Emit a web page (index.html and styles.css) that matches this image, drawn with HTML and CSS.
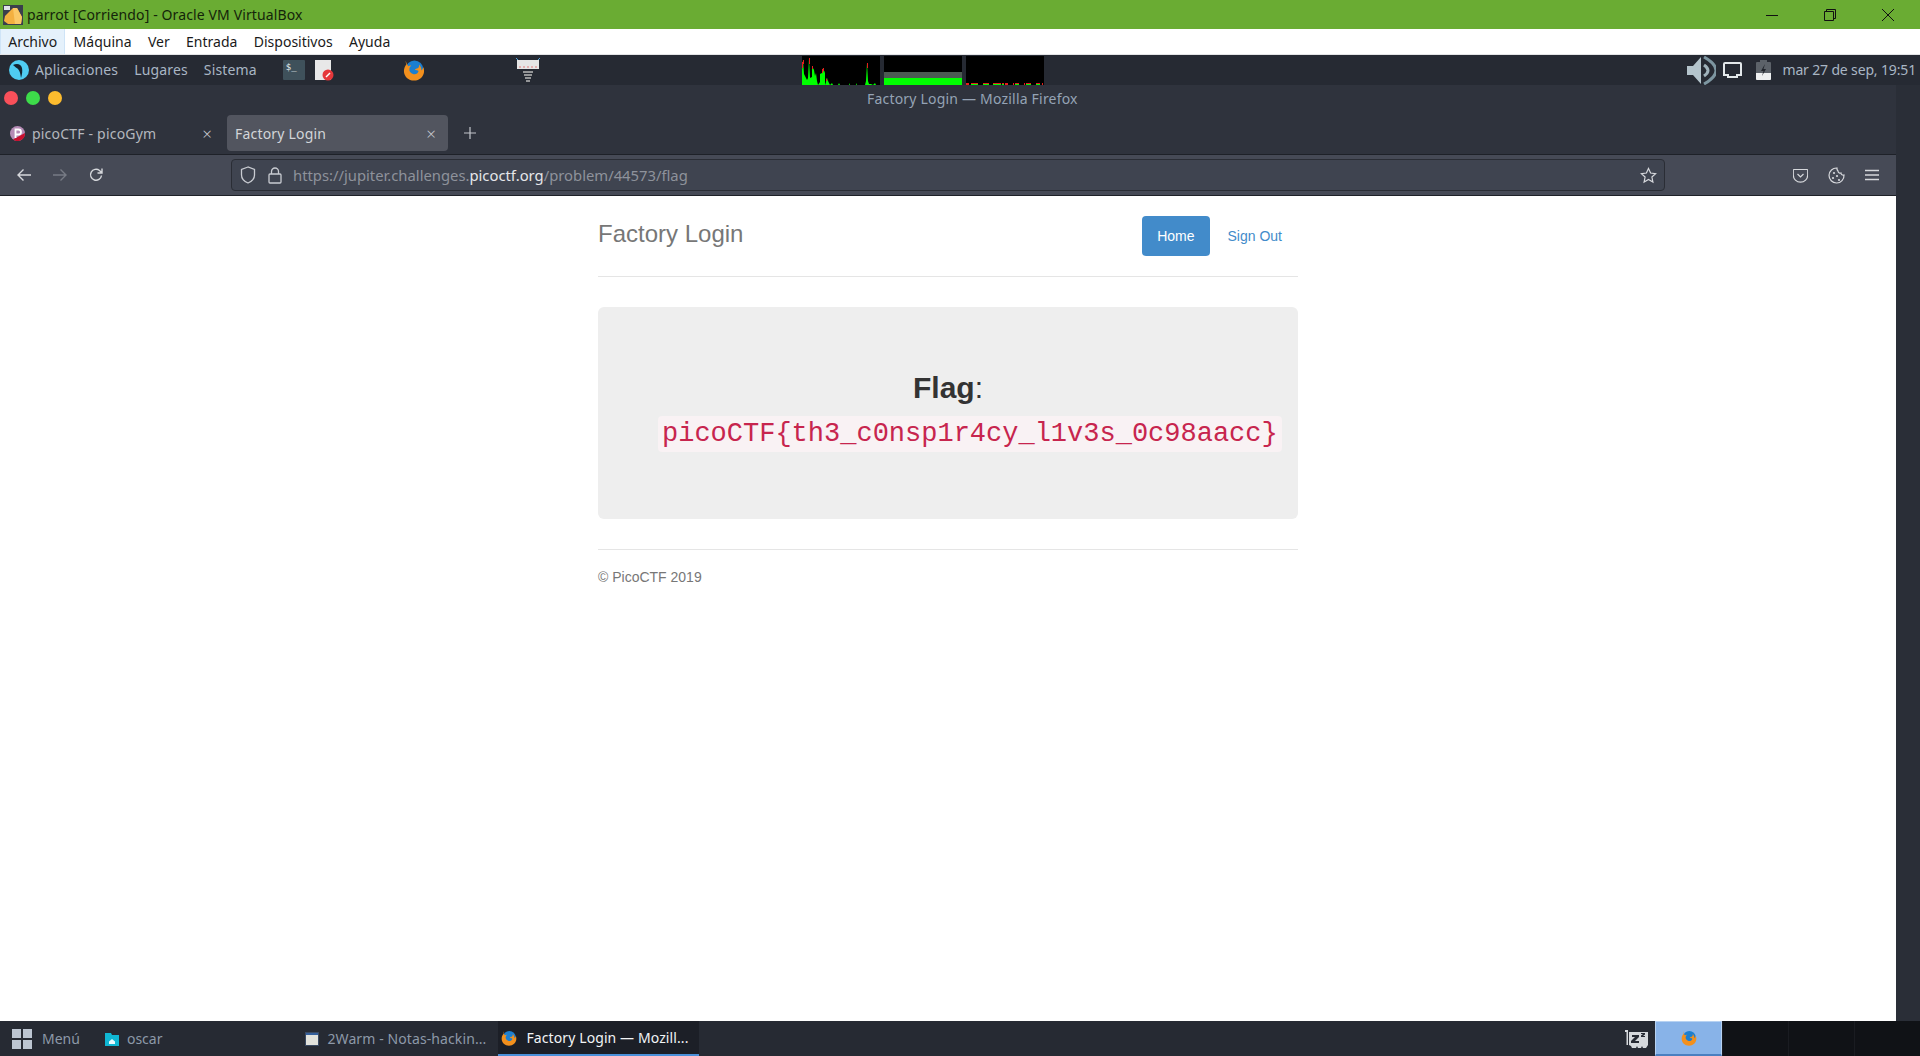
FILE: index.html
```html
<!DOCTYPE html>
<html lang="es">
<head>
  <meta charset="UTF-8">
  <title>parrot [Corriendo] - Oracle VM VirtualBox</title>
  <link rel="stylesheet" href="styles.css">
</head>
<body>

  <svg class="defs" width="0" height="0">
    <symbol id="firefox" viewBox="0 0 24 24">
      <circle cx="12.5" cy="11" r="9.5" fill="#1c7fd0"/>
      <path d="M3 2c0 2 .2 3 .8 3.8C2.5 7.5 1 10 1 13c0 6 5 10.5 11 10.5S23 19 23 13c0-1.5-.3-3-.9-4.2-.3 2-1.100 3-2.100 3.700.2-2.500-.8-5-2.500-6.500.4 2-.3 3.500-1.500 4-1.500.3-3 1-3 1.800 1 .7 3 .5 4 1.200-.5 2.500-3 4-5.500 3.500C8 15.500 6.500 13 7 10.500c.2-1.500 1-2.500 2-3.500-1.500 0-2.500.3-3.500 1-.3-1.500-1-2-1.300-2.500C3.800 4.500 3.300 3.500 3 2z" fill="#f3901d"/>
    </symbol>
  </svg>

  <div class="vbox-title">
    <svg class="vbox-icon" width="20" height="20" viewBox="0 0 20 20">
      <rect width="20" height="20" fill="#3a3f4c"/>
      <path d="M2 11 10 3h4l5 9-1 7H5l-4-3z" fill="#f4b040"/>
      <path d="M10 3h4l5 9-1 7h-6l-1-8z" fill="#fbc866"/>
      <rect x="1" y="1" width="6" height="4" fill="#dfe3e8"/>
    </svg>
    <span class="vbox-name">parrot [Corriendo] - Oracle VM VirtualBox</span>
    <div class="win-buttons">
      <svg width="14" height="14" viewBox="0 0 14 14"><path d="M1 7.5h12" stroke="#111" fill="none"/></svg>
      <svg width="14" height="14" viewBox="0 0 14 14"><path d="M3.5 3.500V1.500h9v9h-2M1.500 3.500h9v9h-9z" stroke="#111" fill="none"/></svg>
      <svg width="14" height="14" viewBox="0 0 14 14"><path d="M1 1l12 12M13 1 1 13" stroke="#111" fill="none"/></svg>
    </div>
  </div>

  <div class="vbox-menu">
    <span class="menu-item active">Archivo</span>
    <span class="menu-item">Máquina</span>
    <span class="menu-item">Ver</span>
    <span class="menu-item">Entrada</span>
    <span class="menu-item">Dispositivos</span>
    <span class="menu-item">Ayuda</span>
  </div>

  <div class="top-panel">
    <svg class="parrot-logo" width="20" height="20" viewBox="0 0 20 20">
      <circle cx="10" cy="10" r="10" fill="#4fcdf2"/>
      <path d="M4 5c4-2 8-1 9 3 .6 3 .2 6-1 10-.6-4-1-7-3-9-1-1-3-2-5-4z" fill="#14232f"/>
    </svg>
    <span class="panel-link first">Aplicaciones</span>
    <span class="panel-link">Lugares</span>
    <span class="panel-link">Sistema</span>

    <div class="term-icon">$_</div>
    <svg class="doc-icon" width="19" height="21" viewBox="0 0 19 21">
      <rect width="16" height="20" fill="#e8e8e8"/>
      <circle cx="13" cy="15" r="5.5" fill="#e5383b"/>
      <path d="M11 17l4-4" stroke="#fff" stroke-width="1.5"/>
    </svg>
    <svg class="panel-fox" width="22" height="22"><use href="#firefox"/></svg>
    <svg class="lamp-icon" width="24" height="26" viewBox="0 0 24 26">
      <path d="M2 3 0 1M22 3l2-2" stroke="#5aa7e0"/>
      <rect x="1" y="3" width="22" height="9" fill="#e6e6e6"/>
      <path d="M3 10h18" stroke="#e07b7b" stroke-dasharray="2 2"/>
      <path d="M7 15h10M8 18h8M9 21h6M10 24h4" stroke="#b9b9b9" stroke-width="1.5"/>
    </svg>

    <div class="monitors">
      <svg class="monitor" viewBox="0 0 78 29">
        <path d="M0 29V14L1 4 2 18 4 22 5 24 6 22 7 2 8 22 10 21V10L12 14 13 20 14 17 15 25 16 29 18 26V18L20 17 21 12 23 17V26L24 29V23L25 22 26 25 27 27 28 29 30 27 31 29H36L37 27 38 29H47V27L48 29H54V27L55 29H63L64 25 65 7 66 25 67 28H69L71 29 73 27 74 29z" fill="#00ff00"/>
        <path d="M.5 6V12M1.500 4V8M7.500 2V8M10.500 10V13M20.500 13V17M21.500 12V15M24.500 23V25M65.500 7V12" fill="none" stroke="#e81d1d"/>
      </svg>
      <svg class="monitor" viewBox="0 0 78 29">
        <rect y="16" width="78" height="6" fill="#4c5a52"/>
        <rect y="22" width="78" height="7" fill="#00ff00"/>
      </svg>
      <svg class="monitor" viewBox="0 0 78 29">
        <path d="M0 27h3v2H0zM5 27h7v2H5zM17 27h6v2h-6zM27 27h8v2h-8zM36 27h2v2h-2zM39 27h3v2h-3zM47 27h1v2h-1zM49 27h4v2h-4zM58 27h1v2h-1zM60 27h5v2h-5zM70 27h4v2h-4zM76 27h1v2h-1z" fill="#e81d1d"/>
        <path d="M5 28h7v1H5zM17 28h6v1h-6zM27 28h8v1h-8zM36 28h2v1h-2zM49 28h4v1h-4zM60 28h5v1h-5zM70 28h4v1h-4z" fill="#00ff00"/>
      </svg>
    </div>

    <div class="tray">
      <svg width="29" height="29" viewBox="0 0 29 29">
        <path d="M0 10h6l8-9v27l-8-9H0z" fill="#b4c4cc"/>
        <path d="M17 9q8 5.500 0 11" stroke="#9fb2bb" stroke-width="3" fill="none"/>
        <path d="M17 1q24 13.500 0 27" stroke="#7d96a1" stroke-width="3" fill="none"/>
      </svg>
      <svg class="net-icon" width="19" height="17" viewBox="0 0 19 17">
        <path d="M1 2a1 1 0 0 1 1-1h15a1 1 0 0 1 1 1v11h-4v2H5v-2H1z" fill="none" stroke="#e3e8ea" stroke-width="2"/>
      </svg>
      <svg class="bat-icon" width="15" height="20" viewBox="0 0 15 20">
        <rect x="4" width="7" height="2" fill="#5c6269"/>
        <rect y="2" width="15" height="18" rx="1" fill="#5c6269"/>
        <path d="M0 13h15v6a1 1 0 0 1-1 1H1a1 1 0 0 1-1-1z" fill="#eef0f1"/>
        <path d="M9 4 5 11h2.500L6 16l4-7H7.500z" fill="#20242b"/>
      </svg>
      <span class="clock">mar 27 de sep, 19:51</span>
    </div>
  </div>

  <div class="desktop">
    <div class="firefox">
      <div class="ff-title">
        <div class="dots">
          <span class="dot red"></span>
          <span class="dot green"></span>
          <span class="dot yellow"></span>
        </div>
        <span class="ff-title-text">Factory Login — Mozilla Firefox</span>
      </div>

      <div class="tabs">
        <div class="tab">
          <svg width="15" height="15" viewBox="0 0 15 15">
            <circle cx="7.5" cy="7.5" r="7.5" fill="#b58bb5"/>
            <path d="M15 7.5A7.500 7.500 0 0 1 3 13.500L15 7z" fill="#c8102e"/>
            <path d="M5.500 12V3.500h3a2.500 2.500 0 0 1 0 5h-3" fill="none" stroke="#fff" stroke-width="1.8"/>
          </svg>
          <span class="tab-label">picoCTF - picoGym</span>
          <span class="tab-close">×</span>
        </div>
        <div class="tab current">
          <span class="tab-label">Factory Login</span>
          <span class="tab-close">×</span>
        </div>
        <svg class="new-tab" width="12" height="12" viewBox="0 0 12 12"><path d="M6 0v12M0 6h12" stroke="#c3c6cc" stroke-width="1.2"/></svg>
      </div>

      <div class="toolbar">
        <svg class="tool back" width="16" height="16" viewBox="0 0 16 16"><path d="M15 8H2M7.500 2.500 2 8l5.500 5.500" fill="none" stroke="#d6d8dc" stroke-width="1.4"/></svg>
        <svg class="tool" width="16" height="16" viewBox="0 0 16 16"><path d="M1 8h13M8.500 2.500 14 8l-5.500 5.500" fill="none" stroke="#777b85" stroke-width="1.4"/></svg>
        <svg class="tool" width="16" height="16" viewBox="0 0 16 16"><path d="M13.500 8.500a5.500 5.500 0 1 1-2-5l2 2M14 1.500v4.500H9.500" fill="none" stroke="#d6d8dc" stroke-width="1.4"/></svg>

        <div class="urlbar">
          <svg width="16" height="18" viewBox="0 0 16 18"><path d="M8 1 1.500 3.500V9c0 4 3 6.500 6.500 8 3.500-1.500 6.500-4 6.500-8V3.500z" fill="none" stroke="#c9ccd2" stroke-width="1.3"/></svg>
          <svg class="lock" width="14" height="17" viewBox="0 0 14 17"><path d="M3.500 7V4.500a3.500 3.500 0 0 1 7 0V7M2 7h10a1 1 0 0 1 1 1v7a1 1 0 0 1-1 1H2a1 1 0 0 1-1-1V8a1 1 0 0 1 1-1z" fill="none" stroke="#c9ccd2" stroke-width="1.3"/></svg>
          <span class="url">https://jupiter.challenges.<b class="url-host">picoctf.org</b>/problem/44573/flag</span>
          <svg class="star" width="17" height="17" viewBox="0 0 17 17"><path d="M8.500 1.500 10.600 6l5 .6-3.700 3.400 1 5-4.400-2.500L4.100 15l1-5L1.400 6.600l5-.6z" fill="none" stroke="#d6d8dc" stroke-width="1.2"/></svg>
        </div>

        <div class="tool-right">
          <svg width="15" height="15" viewBox="0 0 15 15"><path d="M1 1.500h13a.7.7 0 0 1 .7.7V7a7.200 7.200 0 0 1-14.400 0V2.200A.7.7 0 0 1 1 1.500zM4.500 6l3 3 3-3" fill="none" stroke="#d6d8dc" stroke-width="1.2"/></svg>
          <svg width="17" height="17" viewBox="0 0 17 17">
            <path d="M9 1a7.500 7.500 0 1 0 7 7c-1.500.5-3-.5-3-2-1.500.3-3-.6-3-2-.8-.7-1.200-2-1-3z" fill="none" stroke="#d6d8dc" stroke-width="1.2"/>
            <circle cx="6" cy="6" r="1.1" fill="#d6d8dc"/><circle cx="5" cy="11" r="1.1" fill="#d6d8dc"/>
            <circle cx="9" cy="9" r="1.1" fill="#d6d8dc"/><circle cx="11" cy="13" r="1.1" fill="#d6d8dc"/>
          </svg>
          <svg width="14" height="12" viewBox="0 0 14 12"><path d="M0 1.500h14M0 6h14M0 10.500h14" stroke="#d6d8dc" stroke-width="1.3"/></svg>
        </div>
      </div>

      <div class="page">
        <div class="container">
          <div class="header">
            <h3 class="brand">Factory Login</h3>
            <ul class="nav-pills">
              <li><a class="pill active" href="#">Home</a></li>
              <li><a class="pill" href="#">Sign Out</a></li>
            </ul>
          </div>

          <div class="jumbotron">
            <h3 class="flag-line"><b>Flag</b>: <code class="flag">picoCTF{th3_c0nsp1r4cy_l1v3s_0c98aacc}</code></h3>
          </div>

          <footer class="footer">© PicoCTF 2019</footer>
        </div>
      </div>
    </div>
    <div class="side-strip"></div>
  </div>

  <div class="bottom-panel">
    <div class="menu-grid"><i></i><i></i><i></i><i></i></div>
    <span class="bottom-text menu-label">Menú</span>
    <svg class="folder" width="14" height="14" viewBox="0 0 14 14">
      <path d="M0 1h6l1 2h7v11H0z" fill="#10b7d4"/>
      <path d="M7 7l3 2.500V12H4V9.500z" fill="#e9fbff"/>
    </svg>
    <span class="bottom-text oscar">oscar</span>
    <svg class="win-icon" width="14" height="14" viewBox="0 0 14 14">
      <rect width="14" height="14" fill="#e2e2dc"/>
      <rect width="14" height="3" fill="#345f9c"/>
      <rect x=".5" y=".5" width="13" height="13" fill="none" stroke="#3a4a63"/>
    </svg>
    <span class="bottom-text notes">2Warm - Notas-hackin...</span>
    <div class="task-active">
      <svg width="16" height="16"><use href="#firefox"/></svg>
      <span class="task-label">Factory Login — Mozill...</span>
    </div>
    <svg class="sleep-icon" width="23" height="20" viewBox="0 0 23 20">
      <path d="M0 1h3v15H1.500V3H0z" fill="#d5d8dc"/>
      <path d="M4 3h19v13l-2 3h-3l-1-2-1 2h-3l-1-2-1 2H7l-1-2-2-1z" fill="#d5d8dc"/>
      <path d="M7 6h7v2l-4 4h4v2H6v-2l4-4H7zM16 4h4v1.500l-2 1.500h2V8h-4V6.500L18 5h-2z" fill="#262a33"/>
    </svg>
    <div class="workspace current">
      <svg width="16" height="16"><use href="#firefox"/></svg>
    </div>
    <div class="workspace"></div>
    <div class="workspace"></div>
    <div class="workspace"></div>
  </div>

</body>
</html>
```

FILE: styles.css
```css
html, body {
  margin: 0;
  padding: 0;
}

body {
  width: 1920px;
  height: 1056px;
  display: flex;
  flex-direction: column;
  overflow: hidden;
  font-family: "Noto Sans", sans-serif;
  background-color: #262a33;
}

.defs {
  position: absolute;
}

svg {
  display: block;
  flex: none;
}

/* virtualbox window */
.vbox-title {
  height: 29px;
  display: flex;
  align-items: center;
  background-color: #6aac33;
}

.vbox-icon {
  margin-left: 3px;
}

.vbox-name {
  margin-left: 4px;
  font-size: 14px;
  letter-spacing: 0.12px;
  color: #14240a;
}

.win-buttons {
  margin-left: auto;
  margin-right: 25px;
  display: flex;
  gap: 44px;
}

.vbox-menu {
  height: 25px;
  display: flex;
  background-color: #fff;
  border-bottom: 1px solid #e3e4e6;
  font-size: 14px;
  color: #1a1a1a;
}

.menu-item {
  padding: 0 7.2px;
  line-height: 25px;
  border: 1px solid transparent;
  border-width: 0 1px;
}

.menu-item.active {
  background-color: #e5f1fb;
  border-color: #cfe4f7;
}

/* parrot panels */
.top-panel {
  height: 30px;
  display: flex;
  align-items: center;
  background-color: #262a33;
}

.parrot-logo {
  margin-left: 9px;
}

.panel-link {
  margin-left: 16px;
  margin-bottom: 2px;
  font-size: 14px;
  letter-spacing: 0.15px;
  color: #a9b6c4;
}

.panel-link.first {
  margin-left: 6px;
}

.term-icon {
  width: 22px;
  height: 20px;
  margin-left: 26px;
  background-color: #3f515b;
  border-radius: 1px;
  color: #e8eef0;
  font-family: "DejaVu Sans Mono", monospace;
  font-size: 9px;
  line-height: 14px;
  padding-left: 3px;
  box-sizing: border-box;
}

.doc-icon {
  margin-left: 10px;
}

.panel-fox {
  margin-left: 69px;
}

.lamp-icon {
  margin-left: 91px;
}

.monitors {
  margin-left: 262px;
  display: flex;
  gap: 4px;
  align-self: flex-start;
  padding-top: 1px;
}

.monitor {
  width: 78px;
  height: 29px;
  background-color: #000;
}

.tray {
  margin-left: auto;
  display: flex;
  align-items: center;
  padding-right: 4px;
}

.net-icon {
  margin-left: 7px;
}

.bat-icon {
  margin-left: 14px;
}

.clock {
  margin-left: 11px;
  margin-bottom: 2px;
  font-size: 14px;
  letter-spacing: -0.15px;
  color: #a9b6c4;
}

/* firefox window */
.desktop {
  flex: 1;
  display: flex;
  min-height: 0;
}

.firefox {
  flex: 1;
  display: flex;
  flex-direction: column;
  min-width: 0;
}

.side-strip {
  width: 24px;
  background-color: #2a2e37;
}

.ff-title {
  height: 26px;
  padding-bottom: 2px;
  display: flex;
  align-items: center;
  background-color: #2f333d;
}

.dots {
  display: flex;
  gap: 8px;
  margin-left: 4px;
}

.dot {
  width: 14px;
  height: 14px;
  border-radius: 50%;
}

.red { background-color: #f9505a; }
.green { background-color: #3ddc4a; }
.yellow { background-color: #fdbc2e; }

.ff-title-text {
  margin-left: 805px;
  font-size: 14px;
  letter-spacing: 0.2px;
  color: #95a3b5;
}

.tabs {
  height: 42px;
  display: flex;
  align-items: flex-start;
  padding-top: 2px;
  box-sizing: border-box;
  background-color: #2f333d;
  border-bottom: 1px solid #1e2128;
}

.tab {
  height: 36px;
  width: 227px;
  display: flex;
  align-items: center;
  padding-left: 10px;
  box-sizing: border-box;
  font-size: 14px;
  color: #b4b7bd;
}

.tab-label {
  margin-left: 7px;
  letter-spacing: 0.2px;
}

.tab-close {
  margin-left: auto;
  margin-right: 15px;
  font-size: 17px;
  font-weight: 300;
  color: #c3c6cc;
}

.tab.current {
  width: 221px;
  padding-left: 1px;
  background-color: #52555f;
  border-radius: 4px;
  color: #d3d5d9;
}

.tab.current .tab-close {
  margin-right: 12px;
}

.new-tab {
  margin: 12px 0 0 16px;
}

.toolbar {
  height: 41px;
  display: flex;
  align-items: center;
  padding-left: 16px;
  box-sizing: border-box;
  background-color: #464a56;
  border-bottom: 1px solid #1e2128;
}

.tool {
  margin-right: 20px;
}

.urlbar {
  width: 1434px;
  height: 32px;
  margin-left: 107px;
  display: flex;
  align-items: center;
  padding: 0 7px 0 8px;
  box-sizing: border-box;
  background-color: #3f4450;
  border: 1px solid #2a2d35;
  border-radius: 4px;
}

.lock {
  margin-left: 12px;
}

.url {
  margin-left: 11px;
  font-size: 14.8px;
  color: #8e929b;
}

.url-host {
  font-weight: normal;
  color: #e6e7ea;
}

.star {
  margin-left: auto;
}

.tool-right {
  display: flex;
  align-items: center;
  margin-left: 128px;
  gap: 20px;
}

/* page inside the browser */
.page {
  flex: 1;
  background-color: #fff;
  font-family: "Liberation Sans", Arial, sans-serif;
  font-size: 14px;
  line-height: 20px;
  color: #333;
  padding-top: 20px;
}

.container {
  width: 700px;
  margin: 0 auto;
}

.header {
  display: flex;
  justify-content: space-between;
  padding-bottom: 20px;
  border-bottom: 1px solid #e5e5e5;
  margin-bottom: 30px;
}

.brand {
  margin: 0;
  font-size: 24px;
  font-weight: 500;
  line-height: 36px;
  color: #777;
}

.nav-pills {
  display: flex;
  gap: 3px;
  margin: 0 1px 0 0;
  padding: 0;
  list-style: none;
}

.pill {
  display: block;
  padding: 10px 15px;
  border-radius: 4px;
  color: #428bca;
  text-decoration: none;
}

.pill.active {
  background-color: #428bca;
  color: #fff;
}

.jumbotron {
  height: 212px;
  box-sizing: border-box;
  padding: 48px 60px;
  margin-bottom: 30px;
  background-color: #eee;
  border-radius: 6px;
  text-align: center;
}

.flag-line {
  margin: 16px 0 0;
  font-size: 30px;
  font-weight: 500;
  line-height: 33px;
  color: #333;
}

.flag {
  display: inline-block;
  margin-top: 12px;
  padding: 2px 4px;
  font-family: "Liberation Mono", monospace;
  font-size: 90%;
  line-height: 32px;
  color: #c7254e;
  background-color: #f9f2f4;
  border-radius: 4px;
}

.footer {
  padding-top: 17px;
  border-top: 1px solid #e5e5e5;
  color: #777;
}

/* bottom panel */
.bottom-panel {
  height: 35px;
  display: flex;
  align-items: center;
  background-color: #262a33;
}

.menu-grid {
  width: 20px;
  height: 20px;
  margin-left: 12px;
  display: grid;
  grid-template-columns: 1fr 1fr;
  gap: 2px;
}

.menu-grid i {
  background-color: #bcc5d1;
}

.bottom-text {
  font-size: 14px;
  color: #8d99a8;
}

.menu-label {
  margin-left: 10px;
}

.folder {
  margin-left: 25px;
}

.oscar {
  margin-left: 8px;
}

.win-icon {
  margin-left: 143px;
}

.notes {
  margin-left: 8px;
  letter-spacing: 0.1px;
}

.task-active {
  width: 201px;
  height: 35px;
  margin-left: 12px;
  display: flex;
  align-items: center;
  padding-left: 3px;
  box-sizing: border-box;
  background-color: #1c1f27;
  border-bottom: 2px solid #4a90d9;
}

.task-label {
  margin-left: 9px;
  font-size: 14px;
  letter-spacing: 0.1px;
  color: #f2f4f6;
}

.sleep-icon {
  margin-left: 926px;
}

.workspace {
  flex: 1;
  height: 35px;
  display: flex;
  align-items: center;
  justify-content: center;
  box-sizing: border-box;
  background-color: #101216;
  border-left: 1px solid #1a1c21;
}

.workspace.current {
  margin-left: 7px;
  background-color: #88b3e8;
  border: 1px solid #b7d2f2;
  border-bottom: 2px solid #4a7fc0;
}
```
